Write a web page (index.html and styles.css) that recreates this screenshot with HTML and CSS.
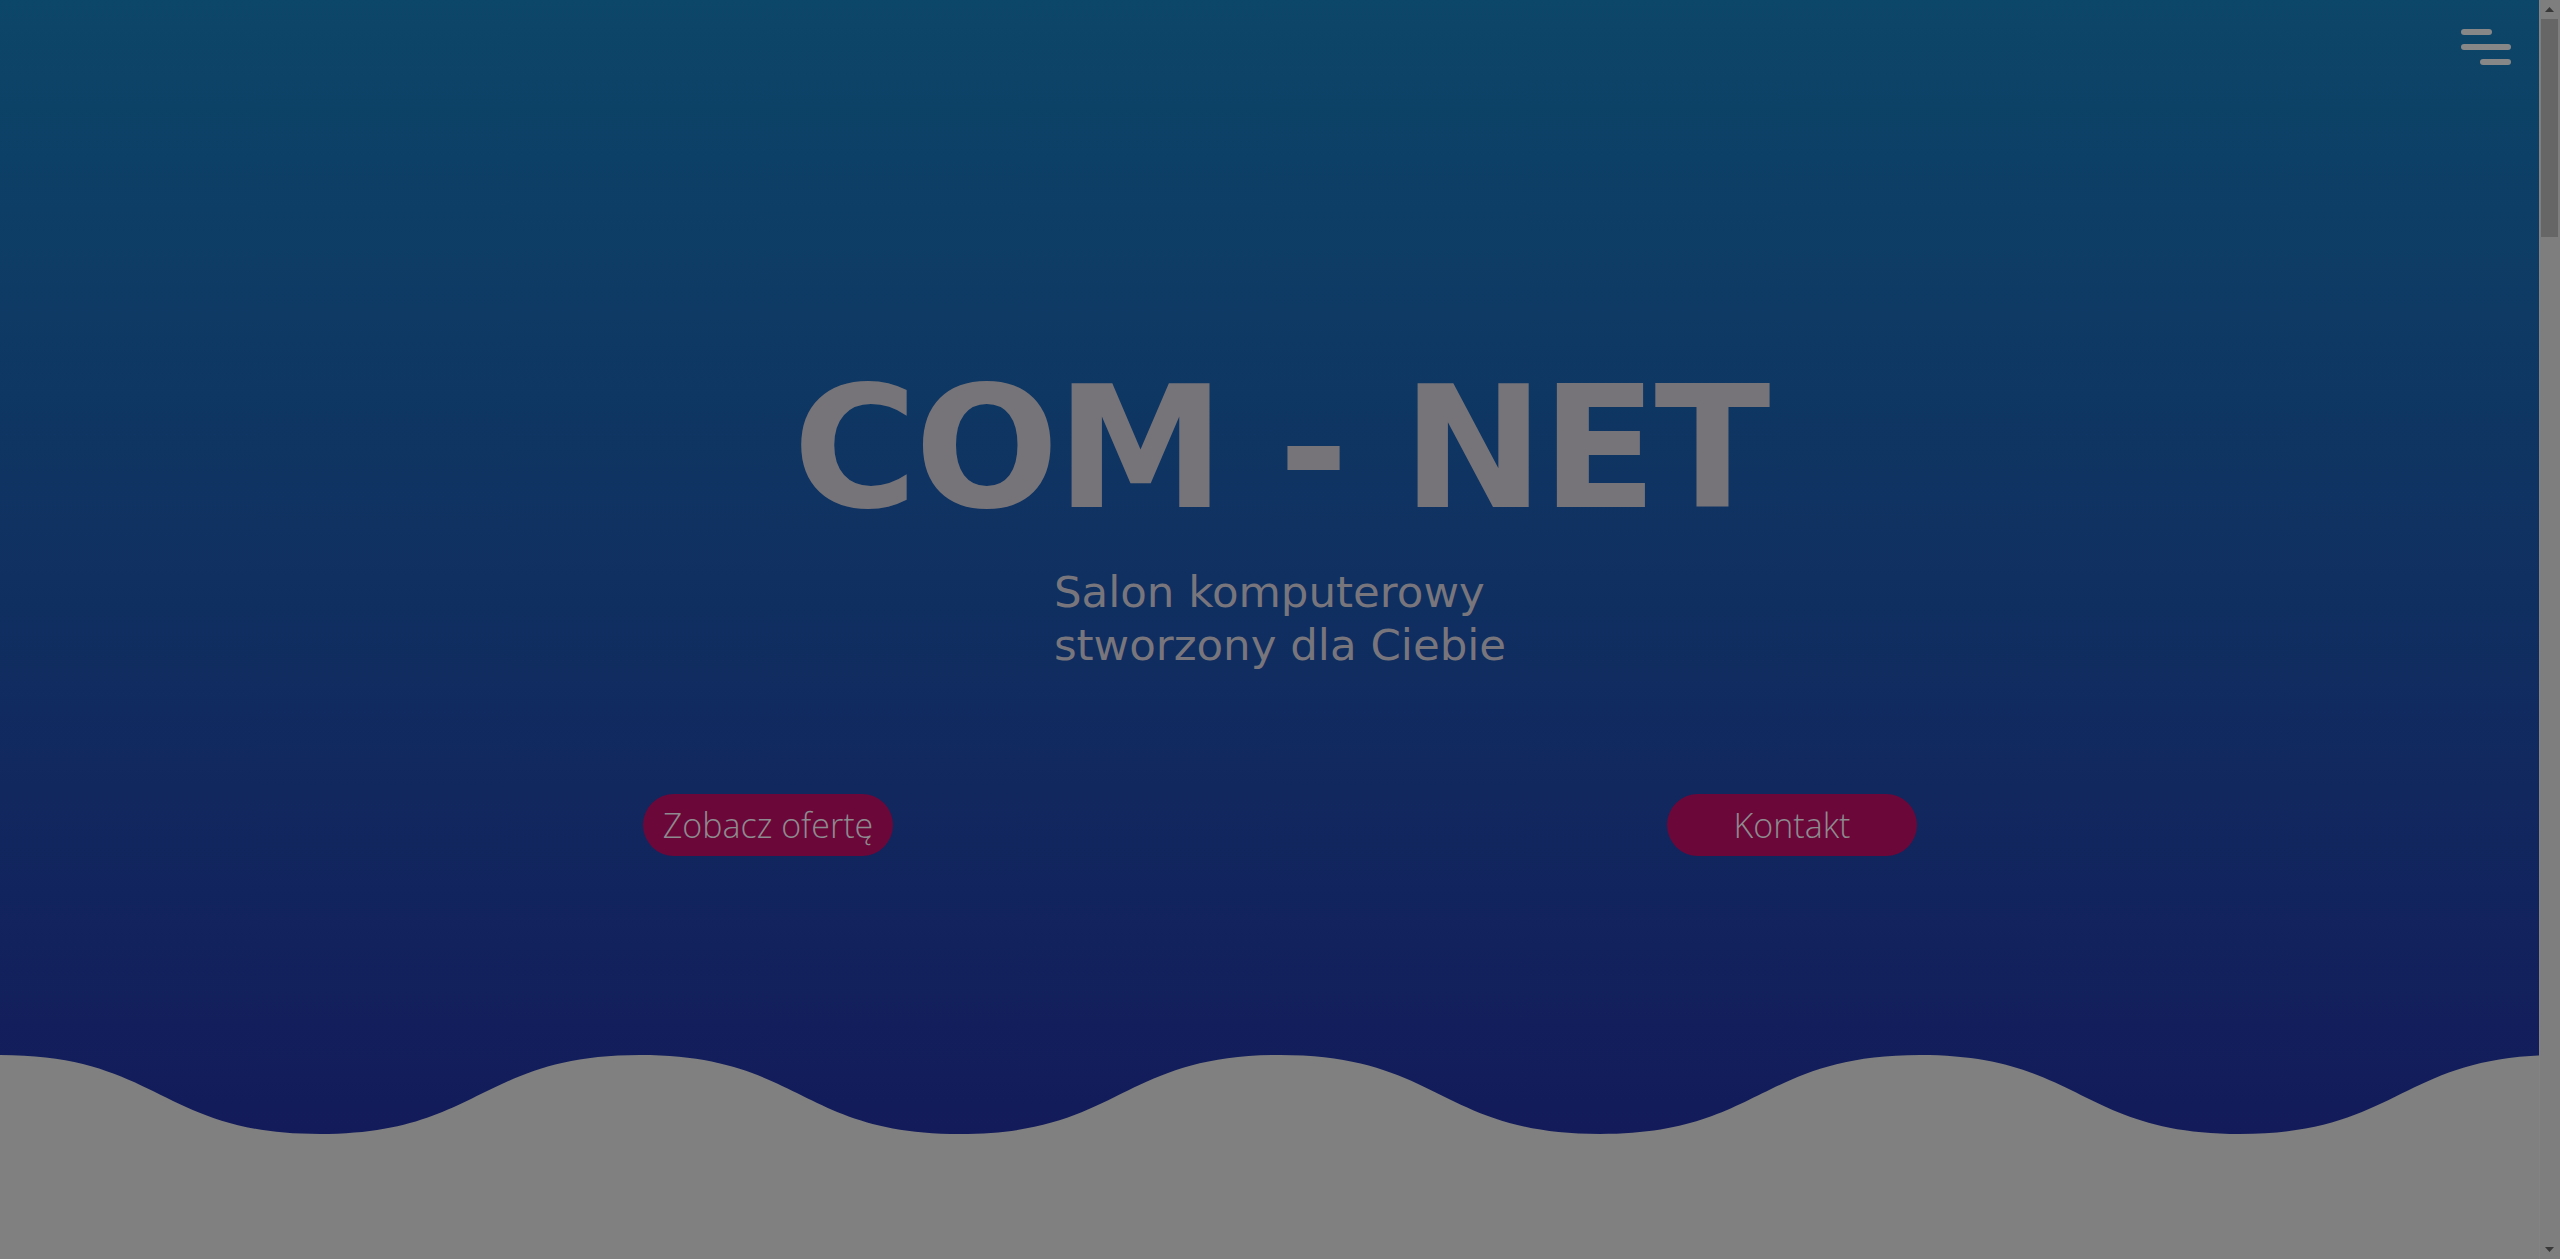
FILE: index.html
```html
<!DOCTYPE html>
<html lang="pl">
<head>
<meta charset="utf-8">
<title>COM - NET</title>
<link rel="stylesheet" href="styles.css">
</head>
<body>
<header class="hero">
  <button class="menu-toggle" aria-label="Menu">
    <span class="menu-line menu-line--short"></span>
    <span class="menu-line menu-line--long"></span>
    <span class="menu-line menu-line--short menu-line--end"></span>
  </button>
  <div class="hero-content">
    <h1 class="hero-title">COM - NET</h1>
    <p class="hero-subtitle">Salon komputerowy<br>stworzony dla Ciebie</p>
    <div class="hero-actions">
      <a class="btn" href="#oferta">Zobacz ofertę</a>
      <a class="btn" href="#kontakt">Kontakt</a>
    </div>
  </div>
  <svg class="hero-wave" viewBox="0 0 2560 204" width="2560" height="204" preserveAspectRatio="none" aria-hidden="true">
    <path d="M0 0 C160 0 160 79 320 79 S480 0 640 0 S800 79 960 79 S1120 0 1280 0 S1440 79 1600 79 S1760 0 1920 0 S2080 79 2240 79 S2400 0 2560 0 V204 H0 Z" fill="#808080"/>
  </svg>
</header>
<main class="content" id="oferta"></main>
<div class="scrollbar" aria-hidden="true">
  <span class="scrollbar-btn">
    <svg width="9" height="5" viewBox="0 0 9 5"><path d="M0 5 L4.5 0 L9 5 Z" fill="#383838"/></svg>
  </span>
  <span class="scrollbar-track"><span class="scrollbar-thumb"></span></span>
  <span class="scrollbar-btn">
    <svg width="9" height="5" viewBox="0 0 9 5"><path d="M0 0 L4.5 5 L9 0 Z" fill="#383838"/></svg>
  </span>
</div>
</body>
</html>
```
FILE: styles.css
```css
html, body {
  margin: 0;
  padding: 0;
}

body {
  overflow-x: hidden;
  background: #808080;
  font-family: "DejaVu Sans", "Liberation Sans", sans-serif;
}

.hero {
  position: relative;
  width: 100vw;
  height: 100vh;
  overflow: hidden;
  background: linear-gradient(180deg, #0c4668 0%, #141659 100%);
}

.menu-toggle {
  position: fixed;
  top: 29px;
  right: 49px;
  z-index: 10;
  display: flex;
  flex-direction: column;
  gap: 9px;
  width: 50px;
  padding: 0;
  border: 0;
  background: none;
  cursor: pointer;
}

.menu-line {
  display: block;
  height: 6px;
  border-radius: 3px;
  background: #878787;
}

.menu-line--short {
  width: 31px;
}

.menu-line--long {
  width: 50px;
}

.menu-line--end {
  align-self: flex-end;
}

.hero-content {
  display: flex;
  flex-direction: column;
  align-items: center;
  padding-top: 363px;
}

.hero-title {
  margin: 0;
  font-family: "DejaVu Sans", sans-serif;
  font-weight: 700;
  font-size: 170px;
  line-height: 1;
  letter-spacing: -3px;
  color: #767479;
  white-space: nowrap;
}

.hero-subtitle {
  margin: 33px 0 0;
  font-family: "DejaVu Sans", sans-serif;
  font-weight: 400;
  font-size: 43.5px;
  line-height: 53px;
  letter-spacing: 0;
  color: #78767c;
  text-align: left;
}

.hero-actions {
  display: flex;
  justify-content: space-around;
  width: 2048px;
  margin-top: 122px;
}

.btn {
  display: flex;
  align-items: center;
  justify-content: center;
  width: 250px;
  height: 62px;
  border-radius: 31px;
  background: #6b0839;
  color: #8e8b90;
  font-family: "Open Sans", sans-serif;
  font-weight: 300;
  font-size: 34px;
  line-height: 1;
  text-decoration: none;
  box-sizing: border-box;
}

.hero-wave {
  position: absolute;
  left: 0;
  bottom: 0;
  display: block;
}

.content {
  min-height: 5800px;
  background: #808080;
}

.scrollbar {
  position: fixed;
  top: 0;
  right: 0;
  z-index: 20;
  display: flex;
  flex-direction: column;
  width: 21px;
  height: 100vh;
  background: #7e7e7e;
  box-shadow: inset 1px 0 0 #838383;
}

.scrollbar-btn {
  display: flex;
  align-items: center;
  justify-content: center;
  height: 19px;
  flex: none;
}

.scrollbar-btn svg {
  display: block;
}

.scrollbar-track {
  flex: 1;
  display: flex;
  flex-direction: column;
  padding: 0 2px;
}

.scrollbar-thumb {
  display: block;
  height: 218px;
  background: #666666;
}
```
